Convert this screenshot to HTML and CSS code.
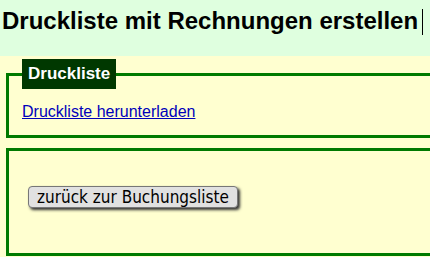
FILE: index.html
```html
<!DOCTYPE html>
<html lang="de">
<head>
    <meta charset="UTF-8">
    <meta name="viewport" content="width=device-width, initial-scale=1.0">
    <title>Druckliste</title>
    <link rel="stylesheet" href="styles.css">
</head>
<body>
    <div class="kopf">
        <h1>Druckliste mit Rechnungen erstellen<span class="caret"></span></h1>
    </div>
    <fieldset class="box">
        <legend>Druckliste</legend>
        <a href="#">Druckliste herunterladen</a>
    </fieldset>
    <fieldset class="box box-knopf">
        <button type="button">zurück zur Buchungsliste</button>
    </fieldset>
</body>
</html>
```

FILE: styles.css
```css
/* Grundlayout */
html, body {
    margin: 0;
    padding: 0;
    overflow: hidden;
}
body {
    font-family: "Liberation Sans", Arial, sans-serif;
    background-color: #ffffd0;
    width: 430px;
    height: 257px;
}
.kopf {
    background-color: #dfffdf;
    height: 56px;
    padding: 0 2px;
    box-sizing: border-box;
}
h1 {
    margin: 0;
    padding-top: 7px;
    font-size: 24px;
    color: #000;
}
.caret {
    display: inline-block;
    width: 0;
    height: 26px;
    border-left: 1px solid #000;
    margin-left: 4px;
    vertical-align: -6px;
}
/* Rahmen (Fieldsets) - rechter Rand liegt ausserhalb des Fensters */
.box {
    border: 3px solid #007a00;
    border-right: 0;
    margin: 3px 0 0 6px;
    padding: 14px 13px 14px;
}
.box legend {
    background-color: #003800;
    color: #fff;
    font-weight: bold;
    font-size: 17px;
    line-height: 20px;
    padding: 5px 6px;
}
.box a {
    color: #0000bb;
    font-size: 16px;
}
.box-knopf {
    margin-top: 10px;
    padding: 35px 13px 45px 19px;
}
button {
    font-family: "DejaVu Sans Condensed", "DejaVu Sans", sans-serif;
    font-size: 17px;
    color: #000;
    background-color: #e1e1e1;
    border: 1px solid #777;
    border-radius: 4px;
    padding: 0 8px;
    box-shadow: 2px 2px 3px #333;
    cursor: pointer;
}
```
